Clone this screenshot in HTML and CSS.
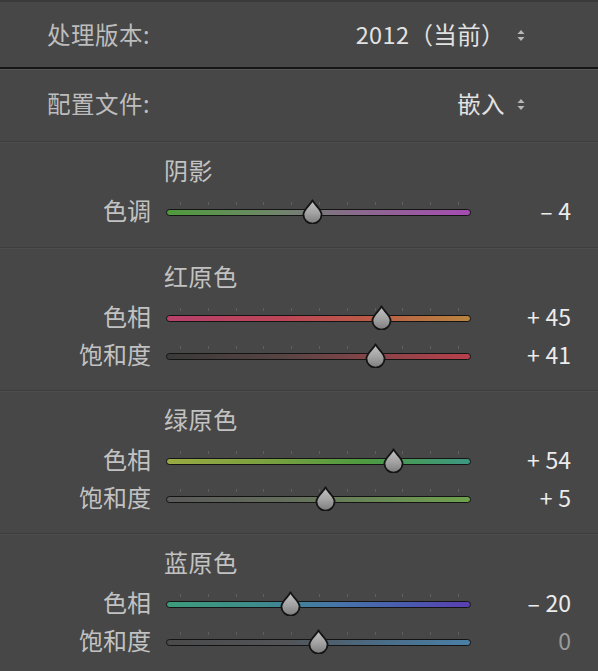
FILE: index.html
```html
<!DOCTYPE html>
<html lang="zh-CN">
<head>
<meta charset="utf-8">
<link rel="stylesheet" href="styles.css">
</head>
<body>
<div class="panel">
  <div class="toprow first">
    <span class="tlabel">处理版本:</span>
    <span class="tvalue">2012（当前）<svg class="updown" width="8" height="11" viewBox="0 0 8 11"><path d="M4 0 L7.5 4 H0.5 Z M4 11 L7.5 7 H0.5 Z" fill="#b8b8b8"/></svg></span>
  </div>
  <div class="toprow second">
    <span class="tlabel">配置文件:</span>
    <span class="tvalue">嵌入<svg class="updown" width="8" height="11" viewBox="0 0 8 11"><path d="M4 0 L7.5 4 H0.5 Z M4 11 L7.5 7 H0.5 Z" fill="#b8b8b8"/></svg></span>
  </div>

  <div class="section short">
    <div class="heading">阴影</div>
    <div class="srow">
      <span class="slabel">色调</span>
      <div class="track tint"><svg class="thumb" style="--p:0.48" width="21" height="25" viewBox="0 0 22 26"><use href="#drop"/></svg></div>
      <span class="sval">–&#8197;4</span>
    </div>
  </div>

  <div class="section">
    <div class="heading">红原色</div>
    <div class="srow">
      <span class="slabel">色相</span>
      <div class="track red-hue"><svg class="thumb" style="--p:0.725" width="21" height="25" viewBox="0 0 22 26"><use href="#drop"/></svg></div>
      <span class="sval">+&#8197;45</span>
    </div>
    <div class="srow">
      <span class="slabel">饱和度</span>
      <div class="track red-sat"><svg class="thumb" style="--p:0.705" width="21" height="25" viewBox="0 0 22 26"><use href="#drop"/></svg></div>
      <span class="sval">+&#8197;41</span>
    </div>
  </div>

  <div class="section">
    <div class="heading">绿原色</div>
    <div class="srow">
      <span class="slabel">色相</span>
      <div class="track green-hue"><svg class="thumb" style="--p:0.77" width="21" height="25" viewBox="0 0 22 26"><use href="#drop"/></svg></div>
      <span class="sval">+&#8197;54</span>
    </div>
    <div class="srow">
      <span class="slabel">饱和度</span>
      <div class="track green-sat"><svg class="thumb" style="--p:0.525" width="21" height="25" viewBox="0 0 22 26"><use href="#drop"/></svg></div>
      <span class="sval">+&#8197;5</span>
    </div>
  </div>

  <div class="section last">
    <div class="heading">蓝原色</div>
    <div class="srow">
      <span class="slabel">色相</span>
      <div class="track blue-hue"><svg class="thumb" style="--p:0.40" width="21" height="25" viewBox="0 0 22 26"><use href="#drop"/></svg></div>
      <span class="sval">–&#8197;20</span>
    </div>
    <div class="srow">
      <span class="slabel">饱和度</span>
      <div class="track blue-sat"><svg class="thumb" style="--p:0.50" width="21" height="25" viewBox="0 0 22 26"><use href="#drop"/></svg></div>
      <span class="sval dim">0</span>
    </div>
  </div>
</div>

<svg class="defs" width="0" height="0">
  <defs>
    <linearGradient id="dropfill" x1="0" y1="0" x2="0" y2="1">
      <stop offset="0" stop-color="#c4c4c4"/>
      <stop offset="0.55" stop-color="#a2a2a2"/>
      <stop offset="1" stop-color="#7c7c7c"/>
    </linearGradient>
    <symbol id="drop" viewBox="0 0 22 26">
      <path d="M11 1.2 C12.5 5.5 20.5 10.5 20.5 16.2 A9.5 9.5 0 0 1 1.5 16.2 C1.5 10.5 9.5 5.5 11 1.2 Z" fill="url(#dropfill)" stroke="#141414" stroke-width="1.9" stroke-linejoin="round"/>
    </symbol>
  </defs>
</svg>
</body>
</html>
```

FILE: styles.css
```css
html, body {
  margin: 0;
  padding: 0;
  background: #474747;
}

body {
  width: 598px;
  height: 671px;
  overflow: hidden;
  font-family: "Noto Sans CJK SC", "Noto Sans", sans-serif;
}

.panel {
  width: 598px;
  border-top: 2px solid #3a3a3a;
}

.toprow {
  display: flex;
  align-items: center;
  justify-content: space-between;
  padding: 0 73px 0 47px;
  font-size: 23.5px;
  color: #bdbdbd;
  box-sizing: border-box;
}

.toprow.first {
  height: 67px;
  padding-bottom: 1px;
  border-bottom: 2px solid #161616;
  box-shadow: 0 1px 0 #565656;
}

.toprow.second {
  height: 73px;
  padding-bottom: 4px;
  border-bottom: 1px solid #3d3d3d;
  box-shadow: 0 1px 0 #4e4e4e;
}

.tlabel {
  letter-spacing: 0.5px;
}

.tvalue {
  display: flex;
  align-items: center;
  color: #e2e2e2;
  letter-spacing: 0.4px;
}

.updown {
  margin-left: 12px;
  margin-top: 2px;
}

.section {
  padding: 13px 0 17px;
  border-bottom: 1px solid #3d3d3d;
  box-shadow: 0 1px 0 #4e4e4e;
}

.section.short {
  padding-top: 13px;
  padding-bottom: 18px;
}

.section.last {
  border-bottom: none;
  box-shadow: none;
}

.heading {
  height: 30px;
  line-height: 30px;
  padding-left: 164px;
  font-size: 24px;
  letter-spacing: 0.6px;
  color: #c2c2c2;
  margin-bottom: 6px;
}

.srow {
  display: grid;
  grid-template-columns: 151px 305px 1fr;
  column-gap: 15px;
  align-items: center;
  height: 38px;
}

.slabel {
  text-align: right;
  font-size: 24px;
  color: #c2c2c2;
  line-height: 30px;
}

.sval {
  text-align: right;
  padding-right: 27px;
  font-size: 23px;
  color: #ececec;
  line-height: 30px;
}

.sval.dim {
  color: #9a9a9a;
}

.track {
  position: relative;
  height: 5px;
  border: 1.5px solid #141414;
  border-radius: 4px;
  margin-top: 4px;
}

.track::before {
  content: "";
  position: absolute;
  left: 13px;
  top: -8px;
  width: 280px;
  height: 3px;
  background: repeating-linear-gradient(to right, #606060 0 1px, transparent 1px 27.8px);
}

.thumb {
  position: absolute;
  top: -11px;
  left: calc(12.5px + var(--p) * 278px - 10.5px);
}

.defs {
  position: absolute;
  width: 0;
  height: 0;
}

.tint {
  background: linear-gradient(to right, #4f9a3c 0%, #6a8a62 30%, #7a7a7a 48%, #8a6a8c 62%, #a64cb2 100%);
}

.red-hue {
  background: linear-gradient(to right, #b8406c 0%, #bc4656 40%, #bb5a48 65%, #b9843e 100%);
}

.red-sat {
  background: linear-gradient(to right, #3a3a3a 0%, #5a4444 40%, #8a4448 70%, #b8404c 100%);
}

.green-hue {
  background: linear-gradient(to right, #9aaa42 0%, #78a040 35%, #4e9a40 65%, #3c9882 100%);
}

.green-sat {
  background: linear-gradient(to right, #5a5a5a 0%, #646e5c 40%, #6a8a56 70%, #6ea24c 100%);
}

.blue-hue {
  background: linear-gradient(to right, #3c9c7c 0%, #3e8c8c 30%, #4676a8 55%, #4a5ab0 80%, #5a3eb0 100%);
}

.blue-sat {
  background: linear-gradient(to right, #4a4a4a 0%, #525458 40%, #4a6c86 70%, #4a80a6 100%);
}
```
